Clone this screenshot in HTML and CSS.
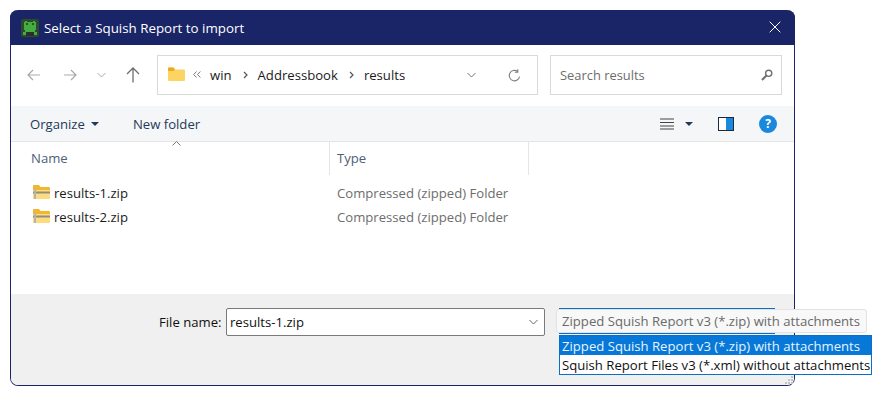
FILE: index.html
```html
<!DOCTYPE html>
<html lang="en">
<head>
<meta charset="utf-8">
<title>Select a Squish Report to import</title>
<link rel="stylesheet" href="styles.css">
</head>
<body>
<div class="dialog">
  <header class="titlebar">
    <svg class="app-icon" width="18" height="18" viewBox="0 0 18 18"><rect width="18" height="18" rx="2" fill="#2c4a30"/><path d="M4 2h2v1h6V2h2v1h1v8h-1v2h2v3h-3v-2H5v2H2v-3h2v-2H3V3h1z" fill="#45ad3f"/><rect x="5" y="4" width="2" height="2" fill="#1e5a22"/><rect x="11" y="4" width="2" height="2" fill="#1e5a22"/><rect x="5" y="13" width="8" height="4" fill="#2a2f2a"/></svg>
    <span class="title">Select a Squish Report to import</span>
    <svg class="close" width="12" height="12" viewBox="0 0 12 12"><path d="M.7.7l10.6 10.6M11.3.7L.7 11.3" stroke="#fff" stroke-width="1" fill="none"/></svg>
  </header>
  <nav class="navbar">
    <div class="nav-buttons">
      <svg width="14" height="12" viewBox="0 0 14 12"><path d="M13 6H1.2M6 1L1 6l5 5" stroke="#a9a9a9" stroke-width="1.2" fill="none"/></svg>
      <svg width="14" height="12" viewBox="0 0 14 12"><path d="M1 6h11.8M8 1l5 5-5 5" stroke="#a9a9a9" stroke-width="1.2" fill="none"/></svg>
      <svg width="9" height="6" viewBox="0 0 9 6"><path d="M.5 1l4 4 4-4" stroke="#a9a9a9" stroke-width="1" fill="none"/></svg>
      <svg width="14" height="16" viewBox="0 0 14 16"><path d="M7 15.500V1.200M1 7l6-6 6 6" stroke="#6e6e6e" stroke-width="1.300" fill="none"/></svg>
    </div>
    <div class="address">
      <svg class="folder" width="17" height="14" viewBox="0 0 17 14"><path d="M0 1.500Q0 .5 1 .5h4.500L7 2.500h9q1 0 1 1V13q0 1-1 1H1q-1 0-1-1z" fill="#fcd462"/><path d="M0 1.500Q0 .5 1 .5h4.500L7 2.500 5.500 4H0z" fill="#eeaa1e"/></svg>
      <svg class="crumb-more" width="8" height="7" viewBox="0 0 8 7"><path d="M3.500.5L.7 3.500l2.800 3M7.300.5L4.500 3.500l2.800 3" stroke="#777" fill="none"/></svg>
      <span class="crumb">win</span>
      <svg class="sep" width="5" height="8" viewBox="0 0 5 8"><path d="M1 1l3 3-3 3" stroke="#555" stroke-width="1.200" fill="none"/></svg>
      <span class="crumb">Addressbook</span>
      <svg class="sep" width="5" height="8" viewBox="0 0 5 8"><path d="M1 1l3 3-3 3" stroke="#555" stroke-width="1.200" fill="none"/></svg>
      <span class="crumb">results</span>
      <svg class="addr-chevron" width="9" height="6" viewBox="0 0 9 6"><path d="M.5 1l4 4 4-4" stroke="#777" fill="none"/></svg>
      <svg class="refresh" width="13" height="13" viewBox="0 0 13 13"><path d="M11.600 7.500A5.200 5.200 0 1 1 9.500 2.400M9.800.2v3h-3" stroke="#808080" stroke-width="1.100" fill="none"/></svg>
    </div>
    <div class="search">
      <span class="search-text">Search results</span>
      <svg width="12" height="12" viewBox="0 0 12 12"><circle cx="7.700" cy="4.300" r="3.100" stroke="#707070" stroke-width="1.400" fill="none"/><path d="M5.500 6.500L1 11" stroke="#707070" stroke-width="2"/></svg>
    </div>
  </nav>
  <div class="toolbar">
    <span class="tool">Organize</span>
    <svg class="caret" width="8" height="4" viewBox="0 0 8 4"><path d="M0 0h8L4 4z" fill="#1f3a5c"/></svg>
    <span class="tool new-folder">New folder</span>
    <span class="spacer"></span>
    <svg class="view" width="14" height="12" viewBox="0 0 14 12"><path d="M0 1h14M0 4.500h14M0 8h14M0 11h14" stroke="#444" stroke-width="1.200"/></svg>
    <svg class="caret view-caret" width="8" height="4" viewBox="0 0 8 4"><path d="M0 0h8L4 4z" fill="#1f3a5c"/></svg>
    <svg class="pane" width="16" height="14" viewBox="0 0 16 14"><rect x=".5" y=".5" width="15" height="13" fill="#fff" stroke="#1c2a3a"/><rect x="8" y="1" width="7" height="12" fill="#1a88dc"/></svg>
    <span class="help">?</span>
  </div>
  <main class="files">
    <svg class="sort" width="9" height="5" viewBox="0 0 9 5"><path d="M.5 4.500l4-4 4 4" stroke="#777" fill="none"/></svg>
    <div class="columns">
      <div class="col col-name">Name</div>
      <div class="col col-type">Type</div>
    </div>
    <ul class="rows">
      <li class="row">
        <span class="cell-name"><svg width="17" height="14" viewBox="0 0 17 14"><path d="M1 0h5l1.500 2H16q1 0 1 1v2H0V1q0-1 1-1z" fill="#f2b72e"/><path d="M0 5h17v8q0 1-1 1H1q-1 0-1-1z" fill="#fcdc7e"/><rect y="6.500" width="17" height="2" fill="#8d8d80"/><rect x="1" y="4" width="2" height="10" fill="#b5b5ad"/></svg>results-1.zip</span>
        <span class="cell-type">Compressed (zipped) Folder</span>
      </li>
      <li class="row">
        <span class="cell-name"><svg width="17" height="14" viewBox="0 0 17 14"><path d="M1 0h5l1.500 2H16q1 0 1 1v2H0V1q0-1 1-1z" fill="#f2b72e"/><path d="M0 5h17v8q0 1-1 1H1q-1 0-1-1z" fill="#fcdc7e"/><rect y="6.500" width="17" height="2" fill="#8d8d80"/><rect x="1" y="4" width="2" height="10" fill="#b5b5ad"/></svg>results-2.zip</span>
        <span class="cell-type">Compressed (zipped) Folder</span>
      </li>
    </ul>
  </main>
  <footer class="footer">
    <label class="file-label">File name:</label>
    <div class="file-input">
      <span>results-1.zip</span>
      <svg width="9" height="6" viewBox="0 0 9 6"><path d="M.5 1l4 4 4-4" stroke="#666" fill="none"/></svg>
    </div>
    <div class="filter">
      <div class="filter-back"></div>
      <div class="filter-current">Zipped Squish Report v3 (*.zip) with attachments</div>
      <ul class="filter-list">
        <li class="filter-item selected">Zipped Squish Report v3 (*.zip) with attachments</li>
        <li class="filter-item">Squish Report Files v3 (*.xml) without attachments</li>
      </ul>
    </div>
    <svg class="grip" width="10" height="10" viewBox="0 0 10 10"><path d="M7 1h2v2H7zM4 4h2v2H4zM7 4h2v2H7zM1 7h2v2H1zM4 7h2v2H4zM7 7h2v2H7z" fill="#c4c4c4"/></svg>
  </footer>
</div>
</body>
</html>
```

FILE: styles.css
```css
* { box-sizing: border-box; }
html, body { margin: 0; padding: 0; background: #fff; }
body {
  width: 885px;
  height: 403px;
  overflow: hidden;
  padding: 10px 0 0 10px;
  font-family: "Open Sans", "Noto Sans", sans-serif;
  font-size: 13.130px;
  color: #1a1a1a;
}
ul { list-style: none; margin: 0; padding: 0; }
svg { display: block; flex: none; }

.dialog {
  width: 785px;
  height: 376px;
  display: flex;
  flex-direction: column;
  background: #fff;
  border: 1px solid #1a2567;
  border-top: 0;
  border-radius: 8px;
  position: relative;
}

.titlebar {
  height: 35px;
  margin: 0 -1px;
  background: #1a2567;
  border-radius: 8px 8px 0 0;
  display: flex;
  align-items: center;
  padding: 0 14px 0 11px;
  color: #fff;
}
.app-icon { margin-right: 5px; }
.title { font-size: 13.350px; flex: 1; }
.close { margin-top: -1px; }

.navbar {
  height: 61px;
  display: flex;
  align-items: center;
  padding: 0 12px 1px 16px;
}
.nav-buttons {
  width: 130px;
  display: flex;
  align-items: center;
}
.nav-buttons svg:nth-child(1) { margin-right: 22px; }
.nav-buttons svg:nth-child(2) { margin-right: 20px; }
.nav-buttons svg:nth-child(3) { margin-right: 20px; }
.address, .search {
  height: 40px;
  border: 1px solid #d9d9d9;
  display: flex;
  align-items: center;
}
.address {
  width: 381px;
  padding: 0 16px 0 10px;
  color: #1a1a1a;
}
.folder { margin: -3px 7px 0 0; }
.crumb-more { margin: -2px 9px 0 1px; }
.sep { margin: 0 10px 0 11px; }
.addr-chevron { margin-left: auto; margin-right: 32px; }
.search {
  width: 232px;
  margin-left: 12px;
  padding: 0 8px 0 9px;
  justify-content: space-between;
  color: #6d6d6d;
  font-size: 12.900px;
}

.toolbar {
  height: 36px;
  flex: none;
  background: #f5f6f7;
  border-bottom: 1px solid #e5e5e5;
  display: flex;
  align-items: center;
  padding: 0 17px 0 19px;
}
.tool { color: #1e3a5c; }
.caret { margin-left: 6px; }
.new-folder { margin-left: 34px; }
.spacer { flex: 1; }
.view-caret { margin-left: 11px; }
.pane { margin-left: 25px; }
.help {
  width: 18px;
  height: 18px;
  margin-left: 25px;
  border-radius: 50%;
  background: #1a88dc;
  color: #fff;
  font-size: 12px;
  font-weight: 700;
  line-height: 18px;
  text-align: center;
}

.files {
  flex: 1;
  position: relative;
}
.sort { position: absolute; left: 161px; top: -1px; }
.columns {
  height: 33px;
  display: flex;
  color: #4c607a;
}
.col {
  padding: 0 0 0 7px;
  line-height: 32px;
  border-right: 1px solid #e5e5e5;
}
.col-name { width: 319px; padding-left: 20px; }
.col-type { width: 199px; }
.rows { padding-top: 6px; }
.row {
  height: 24px;
  display: flex;
  align-items: center;
}
.cell-name {
  width: 319px;
  padding-left: 22px;
  display: flex;
  align-items: center;
  gap: 4px;
  color: #1a1a1a;
}
.cell-name svg { margin-top: -3px; }
.cell-type { padding-left: 7px; color: #6d6d6d; }

.footer {
  height: 91px;
  flex: none;
  background: #f0f0f0;
  border-radius: 0 0 7px 7px;
  display: flex;
  align-items: flex-start;
  padding-top: 14px;
  position: relative;
}
.file-label { margin-left: 148px; width: 67px; line-height: 28px; color: #111; }
.file-input {
  width: 319px;
  height: 28px;
  background: #fff;
  border: 1px solid #7a7a7a;
  border-radius: 2px;
  display: flex;
  align-items: center;
  justify-content: space-between;
  padding: 0 6px 0 3px;
  color: #111;
}
.filter {
  position: absolute;
  left: 545px;
  top: 13px;
  width: 316px;
}
.filter-back {
  position: absolute;
  left: 3px;
  top: 1px;
  width: 216px;
  height: 26px;
  border-top: 1px solid #0a6ecb;
  border-bottom: 1px solid #0a6ecb;
}
.filter-current {
  position: absolute;
  left: 0;
  top: 2px;
  width: 311px;
  height: 24px;
  padding-left: 5px;
  background: #f8f8f8;
  border: 1px solid #e2e2e2;
  border-radius: 3px;
  line-height: 22px;
  color: #6a6a6a;
  white-space: nowrap;
}
.filter-list {
  position: absolute;
  left: 3px;
  top: 28px;
  width: 313px;
  border: 1px solid #0a6ecb;
  background: #fff;
  color: #111;
}
.filter-item {
  height: 19px;
  line-height: 21px;
  padding-left: 2px;
  white-space: nowrap;
}
.selected { background: #0778d8; color: #e8f4ff; }
.grip { position: absolute; right: 0; bottom: 0; }
```
